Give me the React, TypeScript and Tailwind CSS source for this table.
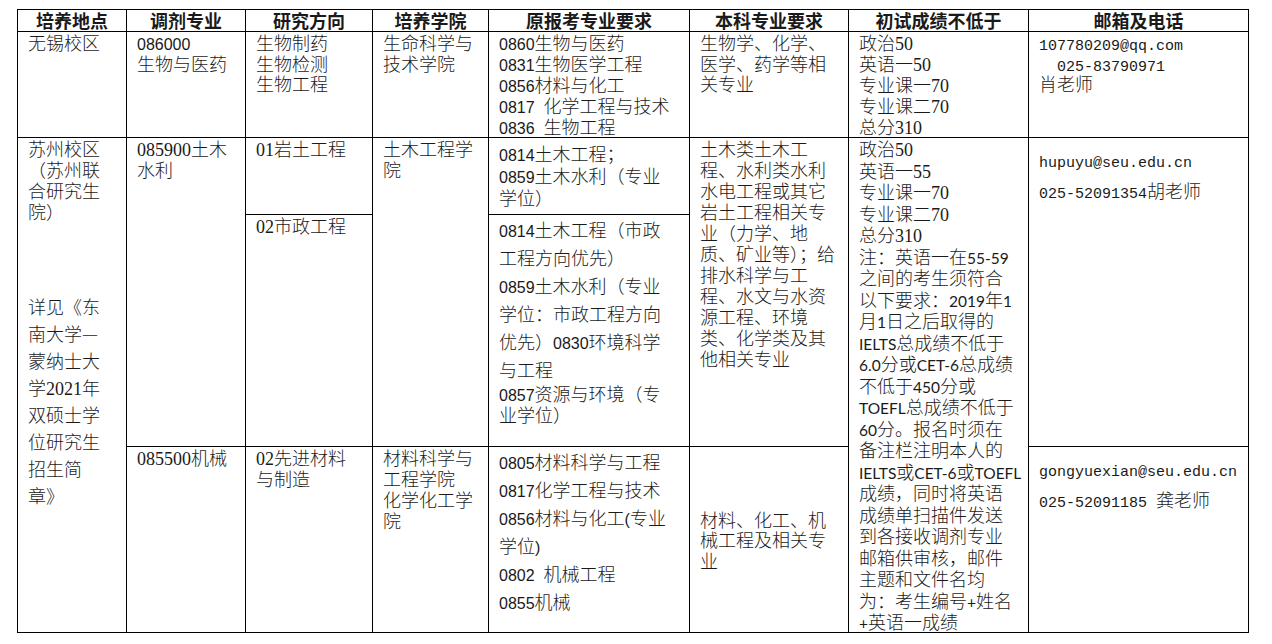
import React from "react";

type P = { children?: React.ReactNode };

const Sa = ({ children }: P) => (
  <span className="font-['Liberation_Sans'] text-[16px] leading-[0]">{children}</span>
);
const Se = ({ children }: P) => (
  <span className="font-['Liberation_Serif'] text-[18px] leading-[0]">{children}</span>
);
const Mo = ({ children }: P) => (
  <span className="font-['Liberation_Mono'] text-[15px] leading-[0]">{children}</span>
);
const Ca = ({ children }: P) => (
  <span className="font-['Lato'] font-normal text-[15.5px] leading-[0]">{children}</span>
);
const Sp = () => <span className="inline-block w-[9px]" />;

const L = ({ children }: P) => <div className="whitespace-nowrap">{children}</div>;

const Cell = ({ className, children }: { className: string; children?: React.ReactNode }) => (
  <div className={`bg-white pl-[10px] ${className}`}>{children}</div>
);

const Head = ({ className, children }: { className: string; children?: React.ReactNode }) => (
  <div className={`bg-white flex items-center justify-center font-bold leading-[21px] whitespace-nowrap ${className}`}>
    {children}
  </div>
);

export default function App() {
  return (
    <div className="w-[1272px] h-[644px] overflow-hidden bg-white pt-[9px] pl-[17px] text-[18px] text-[#1a1a1a] font-['Noto_Sans_CJK_SC',sans-serif] font-light">
      <div className="w-fit grid grid-cols-[108px_118px_126px_115px_200px_158px_179px_219px] grid-rows-[21px_105px_76px_231px_185px] gap-px bg-black border border-black">
        {/* header */}
        <Head className="col-start-1 row-start-1">培养地点</Head>
        <Head className="col-start-2 row-start-1">调剂专业</Head>
        <Head className="col-start-3 row-start-1">研究方向</Head>
        <Head className="col-start-4 row-start-1">培养学院</Head>
        <Head className="col-start-5 row-start-1">原报考专业要求</Head>
        <Head className="col-start-6 row-start-1">本科专业要求</Head>
        <Head className="col-start-7 row-start-1">初试成绩不低于</Head>
        <Head className="col-start-8 row-start-1">邮箱及电话</Head>

        {/* row 1 */}
        <Cell className="col-start-1 row-start-2 leading-[21px]">
          <L>无锡校区</L>
        </Cell>
        <Cell className="col-start-2 row-start-2 leading-[20.5px]">
          <L><Sa>086000</Sa></L>
          <L>生物与医药</L>
        </Cell>
        <Cell className="col-start-3 row-start-2 leading-[20.5px]">
          <L>生物制药</L>
          <L>生物检测</L>
          <L>生物工程</L>
        </Cell>
        <Cell className="col-start-4 row-start-2 leading-[20.5px]">
          <L>生命科学与</L>
          <L>技术学院</L>
        </Cell>
        <Cell className="col-start-5 row-start-2 leading-[21px]">
          <L><Sa>0860</Sa>生物与医药</L>
          <L><Sa>0831</Sa>生物医学工程</L>
          <L><Sa>0856</Sa>材料与化工</L>
          <L><Sa>0817</Sa><Sp />化学工程与技术</L>
          <L><Sa>0836</Sa><Sp />生物工程</L>
        </Cell>
        <Cell className="col-start-6 row-start-2 leading-[20.5px]">
          <L>生物学、化学、</L>
          <L>医学、药学等相</L>
          <L>关专业</L>
        </Cell>
        <Cell className="col-start-7 row-start-2 leading-[21px]">
          <L>政治<Se>50</Se></L>
          <L>英语一<Se>50</Se></L>
          <L>专业课一<Se>70</Se></L>
          <L>专业课二<Se>70</Se></L>
          <L>总分<Se>310</Se></L>
        </Cell>
        <Cell className="col-start-8 row-start-2 leading-[20.5px]">
          <L><Mo>107780209@qq.com</Mo></L>
          <L><span className="pl-[18px]"><Mo>025-83790971</Mo></span></L>
          <L>肖老师</L>
        </Cell>

        {/* row 2 */}
        <Cell className="col-start-1 row-start-3 row-span-3">
          <div className="leading-[21px]">
            <L>苏州校区</L>
            <L>（苏州联</L>
            <L>合研究生</L>
            <L>院）</L>
          </div>
          <div className="leading-[27px] mt-[71px]">
            <L>详见《东</L>
            <L>南大学—</L>
            <L>蒙纳士大</L>
            <L>学<Se>2021</Se>年</L>
            <L>双硕士学</L>
            <L>位研究生</L>
            <L>招生简</L>
            <L>章》</L>
          </div>
        </Cell>
        <Cell className="col-start-2 row-start-3 row-span-2 leading-[21px]">
          <L><Se>085900</Se>土木</L>
          <L>水利</L>
        </Cell>
        <Cell className="col-start-3 row-start-3 leading-[21px]">
          <L><Se>01</Se>岩土工程</L>
        </Cell>
        <Cell className="col-start-3 row-start-4 leading-[21px]">
          <L><Se>02</Se>市政工程</L>
        </Cell>
        <Cell className="col-start-4 row-start-3 row-span-2 leading-[21px]">
          <L>土木工程学</L>
          <L>院</L>
        </Cell>
        <Cell className="col-start-5 row-start-3 pt-[4px] leading-[22px]">
          <L><Sa>0814</Sa>土木工程；</L>
          <L><Sa>0859</Sa>土木水利（专业</L>
          <L>学位）</L>
        </Cell>
        <Cell className="col-start-5 row-start-4">
          <div className="leading-[28px]">
            <L><Sa>0814</Sa>土木工程（市政</L>
            <L>工程方向优先）</L>
            <L><Sa>0859</Sa>土木水利（专业</L>
            <L>学位：市政工程方向</L>
            <L>优先）<Sa>0830</Sa>环境科学</L>
            <L>与工程</L>
          </div>
          <div className="leading-[21px]">
            <L><Sa>0857</Sa>资源与环境（专</L>
            <L>业学位）</L>
          </div>
        </Cell>
        <Cell className="col-start-6 row-start-3 row-span-2 leading-[21px]">
          <L>土木类土木工</L>
          <L>程、水利类水利</L>
          <L>水电工程或其它</L>
          <L>岩土工程相关专</L>
          <L>业（力学、地</L>
          <L>质、矿业等）；给</L>
          <L>排水科学与工</L>
          <L>程、水文与水资</L>
          <L>源工程、环境</L>
          <L>类、化学类及其</L>
          <L>他相关专业</L>
        </Cell>
        <Cell className="col-start-7 row-start-3 row-span-3 leading-[21.5px]">
          <L>政治<Se>50</Se></L>
          <L>英语一<Se>55</Se></L>
          <L>专业课一<Se>70</Se></L>
          <L>专业课二<Se>70</Se></L>
          <L>总分<Se>310</Se></L>
          <L>注：英语一在<Ca>55-59</Ca></L>
          <L>之间的考生须符合</L>
          <L>以下要求：<Ca>2019</Ca>年<Ca>1</Ca></L>
          <L>月<Ca>1</Ca>日之后取得的</L>
          <L><Ca>IELTS</Ca>总成绩不低于</L>
          <L><Ca>6.0</Ca>分或<Ca>CET-6</Ca>总成绩</L>
          <L>不低于<Ca>450</Ca>分或</L>
          <L><Ca>TOEFL</Ca>总成绩不低于</L>
          <L><Ca>60</Ca>分。报名时须在</L>
          <L>备注栏注明本人的</L>
          <L><Ca>IELTS</Ca>或<Ca>CET-6</Ca>或<Ca>TOEFL</Ca></L>
          <L>成绩，同时将英语</L>
          <L>成绩单扫描件发送</L>
          <L>到各接收调剂专业</L>
          <L>邮箱供审核，邮件</L>
          <L>主题和文件名均</L>
          <L>为：考生编号<Ca>+</Ca>姓名</L>
          <L><Ca>+</Ca>英语一成绩</L>
        </Cell>
        <Cell className="col-start-8 row-start-3 row-span-2 pt-[11px] leading-[21px]">
          <L><Mo>hupuyu@seu.edu.cn</Mo></L>
          <div className="mt-[10px] whitespace-nowrap"><Mo>025-52091354</Mo>胡老师</div>
        </Cell>

        {/* row 3 */}
        <Cell className="col-start-2 row-start-5 leading-[21px]">
          <L><Se>085500</Se>机械</L>
        </Cell>
        <Cell className="col-start-3 row-start-5 leading-[21px]">
          <L><Se>02</Se>先进材料</L>
          <L>与制造</L>
        </Cell>
        <Cell className="col-start-4 row-start-5 leading-[21px]">
          <L>材料科学与</L>
          <L>工程学院</L>
          <L>化学化工学</L>
          <L>院</L>
        </Cell>
        <Cell className="col-start-5 row-start-5 leading-[28px]">
          <L><Sa>0805</Sa>材料科学与工程</L>
          <L><Sa>0817</Sa>化学工程与技术</L>
          <L><Sa>0856</Sa>材料与化工<Sa>(</Sa>专业</L>
          <L>学位<Sa>)</Sa></L>
          <L><Sa>0802</Sa><Sp />机械工程</L>
          <L><Sa>0855</Sa>机械</L>
        </Cell>
        <Cell className="col-start-6 row-start-5 flex flex-col justify-center leading-[20.5px]">
          <L>材料、化工、机</L>
          <L>械工程及相关专</L>
          <L>业</L>
        </Cell>
        <Cell className="col-start-8 row-start-5 pt-[11px] leading-[21px]">
          <L><Mo>gongyuexian@seu.edu.cn</Mo></L>
          <div className="mt-[10px] whitespace-nowrap"><Mo>025-52091185 </Mo>龚老师</div>
        </Cell>
      </div>
    </div>
  );
}
